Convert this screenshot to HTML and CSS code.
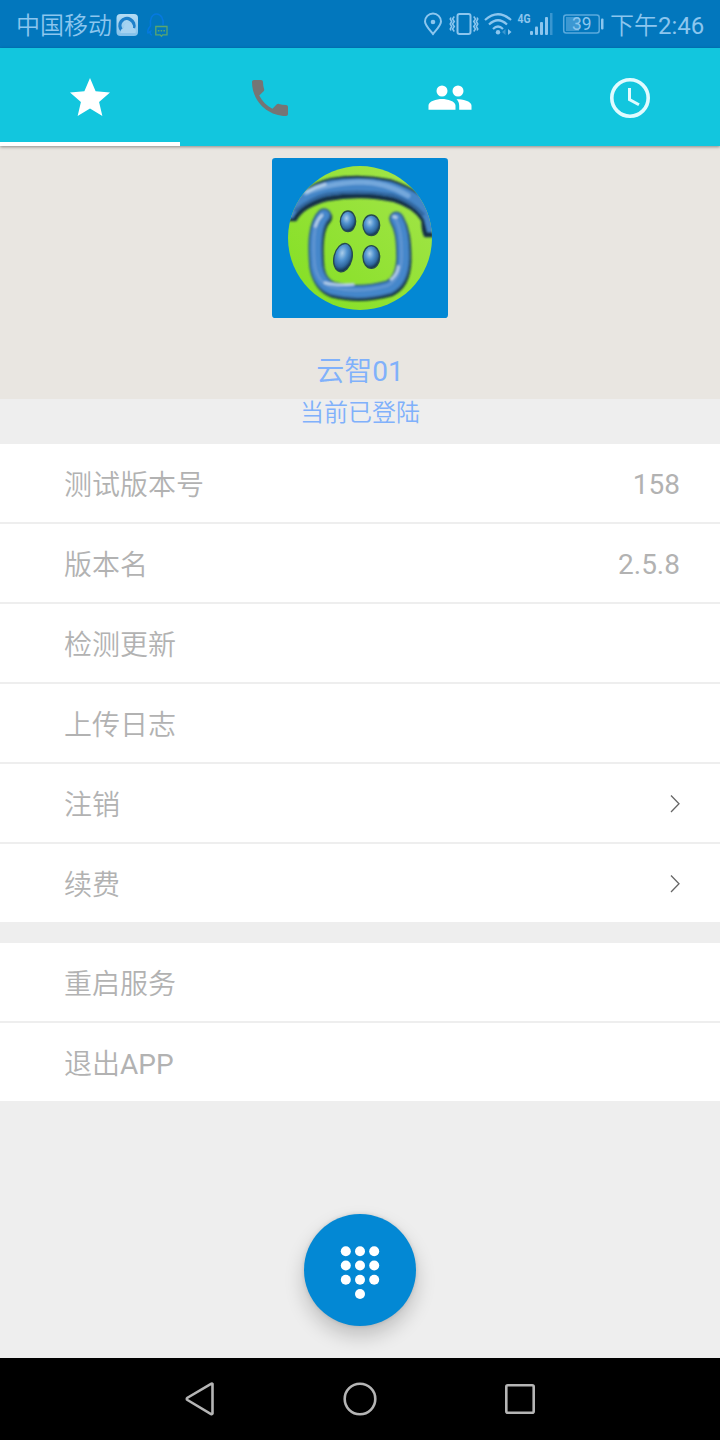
FILE: index.html
```html
<!DOCTYPE html>
<html lang="zh-CN">
<head>
<meta charset="utf-8">
<title>云智01</title>
<link rel="stylesheet" href="styles.css">
</head>
<body>
<div class="screen">
  <header class="status">
    <span class="carrier">中国移动</span>
    <svg class="status-left" width="56" height="48" viewBox="0 0 56 48">
      <defs><linearGradient id="app" x2="0" y2="1"><stop stop-color="#b4dcf4"/><stop offset="1" stop-color="#83c1ea"/></linearGradient></defs>
      <rect x="3.500" y="14" width="21.500" height="22" rx="4" fill="url(#app)"/>
      <path d="M9 30.500A7 7 0 1 1 20.500 28" fill="none" stroke="#1d80ca" stroke-width="3.400"/>
      <path d="M7.500 33a4 4 0 0 1 3.500-5 4.500 4.500 0 0 1 6-5 4 4 0 0 1 3 5q4 1 2.500 5z" fill="#a5d3f1"/>
      <path d="M39 35c-2 0-2-2-1.500-3.500L35 33q-1-3 2.500-7c-1-7 1.500-12 6-12s7.500 5 6.500 11" fill="none" stroke="#0579e0" stroke-width="1.500"/>
      <path d="M42.800 26.500h11.200v8.300h-4.300l-1.300 1.400-1.300-1.400h-4.300z" fill="none" stroke="#5ba66e" stroke-width="1.300"/>
      <path d="M44.800 30.700h1.600m1.200 0h1.600m1.200 0h1.600" stroke="#5ba66e" stroke-width="1.500"/>
    </svg>
    <svg class="status-right" width="190" height="48" viewBox="420 0 190 48">
      <g fill="none" stroke="#8cc6ee" stroke-width="2">
        <path d="M433 34C428 28 425 25 425 21.500a8 8 0 0 1 16 0C441 25 438 28 433 34z"/>
        <rect x="457.500" y="14" width="13" height="20" rx="2"/>
        <path d="M454.300 16.500l-1.800 2.500 1.800 2.500-1.800 2.500 1.800 2.500-1.800 2.500 1.800 2.500M451 17.500l-.8 1.500 1.500 2.500-1.500 2.500 1.500 2.500-1.500 2.500.8 1.500M473.700 16.500l1.800 2.500-1.800 2.500 1.800 2.500-1.800 2.500 1.800 2.500-1.800 2.500M477 17.500l.8 1.500-1.500 2.500 1.500 2.500-1.500 2.500 1.500 2.500-.8 1.500" stroke-width="1.500"/>
        <path d="M485 20Q498 8.500 511 20M489 24.500Q498 16 507 24.500M493 29Q498 24 503 29" stroke-width="2.200"/>
      </g>
      <g fill="#8cc6ee">
        <circle cx="433" cy="22" r="2.300"/>
        <circle cx="498" cy="32.300" r="2.200"/>
        <path d="M508 29v6l3.500-3z"/>
        <path d="M505.500 29v6l-3.500-3z" opacity=".4"/>
        <rect x="530" y="31" width="3" height="4" rx="1"/>
        <rect x="535" y="26.500" width="3" height="8.500" rx="1"/>
        <rect x="540" y="22" width="3" height="13" rx="1"/>
        <rect x="545" y="17" width="3" height="18" rx="1"/>
        <rect x="550" y="13" width="2.500" height="22" opacity=".4"/>
        <rect x="566" y="17" width="13" height="14" opacity=".42"/>
        <rect x="601" y="18.500" width="2.500" height="11" rx="1"/>
      </g>
      <rect x="563.700" y="15" width="35.500" height="18" rx="2.500" fill="none" stroke="#5baadd" stroke-width="1.500"/>
      <text class="net" x="517.500" y="22.500" textLength="13" lengthAdjust="spacingAndGlyphs">4G</text>
      <text class="battery" x="572" y="30.300" textLength="19.500" lengthAdjust="spacingAndGlyphs">39</text>
    </svg>
    <span class="time">下午2:46</span>
  </header>

  <nav class="tabs">
    <div class="tab active"><svg width="48" height="48" viewBox="0 0 24 24"><path d="M12 17.270l6.180 3.730-1.640-7.030L22 9.240l-7.190-.61L12 2 9.190 8.630 2 9.240l5.460 4.730L5.820 21z"/></svg></div>
    <div class="tab phone"><svg width="48" height="48" viewBox="0 0 24 24"><path d="M6.620 10.790c1.440 2.830 3.760 5.140 6.590 6.590l2.200-2.200c.27-.27.67-.36 1.020-.24 1.120.37 2.330.57 3.570.57.55 0 1 .45 1 1V20c0 .55-.45 1-1 1-9.390 0-17-7.610-17-17 0-.55.45-1 1-1h3.500c.55 0 1 .45 1 1 0 1.250.2 2.450.57 3.570.11.35.03.74-.25 1.020l-2.200 2.200z"/></svg></div>
    <div class="tab"><svg width="44" height="28" viewBox="428 83 44 28"><circle cx="442" cy="90" r="5.500"/><circle cx="458" cy="90" r="5.500"/><path d="M428.500 108.800v-4.300c0-4.300 8-6.500 13.500-6.500s13.500 2.200 13.500 6.500v4.300zM456.500 98.200c6 0 15 1.800 15 6.300v4.300h-12.300v-4c0-2.800-1-5-2.700-6.600z"/></svg></div>
    <div class="tab clock"><svg width="48" height="48" viewBox="0 0 48 48"><circle cx="24" cy="24" r="18.200"/><path d="M23.500 14v11.500l9.500 5.300" stroke-width="3"/></svg></div>
  </nav>

  <section class="profile">
    <svg class="avatar" width="176" height="160" viewBox="24 24 528 480">
      <defs>
        <clipPath id="disc"><circle cx="288" cy="264" r="216"/></clipPath>
        <linearGradient id="lime" x1="0" y1="1" x2="1" y2="0"><stop stop-color="#83df22"/><stop offset="1" stop-color="#a5e54b"/></linearGradient>
        <radialGradient id="bead" cx=".4" cy=".35" r=".65"><stop stop-color="#a9cdea"/><stop offset=".4" stop-color="#5394d0"/><stop offset=".75" stop-color="#3069a0"/><stop offset="1" stop-color="#12314c"/></radialGradient>
        <filter id="soft"><feGaussianBlur stdDeviation="3.500"/></filter>
        <path id="bowl" d="M180 196C151 225 152 290 157 350Q165 400 205 416Q285 437 375 412Q416 392 418 325C418 260 412 232 397 206"/>
      </defs>
      <rect x="24" y="24" width="528" height="480" rx="10" fill="#0388d4"/>
      <g clip-path="url(#disc)">
        <rect x="72" y="48" width="432" height="432" fill="url(#lime)"/>
        <g fill="none" stroke-linecap="round" stroke-linejoin="round" filter="url(#soft)">
          <path d="M60 214H97C112 184 145 166 190 154Q290 134 388 156Q448 174 472 213Q472 250 482 262H520V180Q470 118 380 88Q290 68 200 84Q110 104 60 190z" fill="#143149"/>
          <path d="M60 204H87C104 171 145 149 190 138Q290 122 385 141Q450 161 480 207L490 247H520V185Q470 124 380 95Q290 77 200 91Q110 110 60 190z" fill="#4586c8"/>
          <path d="M125 129Q185 101 288 96Q370 98 432 137" stroke="#75a8dc" stroke-width="15"/>
          <path d="M95 181Q145 142 190 132Q290 118 385 135Q445 155 478 193" stroke="#3267a0" stroke-width="9"/>
          <use href="#bowl" x="3" y="6" stroke="#102c40" stroke-width="43"/>
          <use href="#bowl" stroke="#32628f" stroke-width="43"/>
          <use href="#bowl" stroke="#4587cb" stroke-width="32"/>
          <use href="#bowl" x="-5" y="-5" stroke="#6195d2" stroke-width="8"/>
          <path d="M128 126Q155 110 184 103M154 229Q160 209 174 196M183 398Q214 407 268 403M382 388Q400 373 403 350M389 200l8 2" stroke="#b5d0ea" stroke-width="8"/>
        </g>
        <g fill="url(#bead)" stroke="#274b50" stroke-width="4">
          <ellipse cx="252" cy="214" rx="23" ry="31"/>
          <ellipse cx="322" cy="226" rx="25" ry="31"/>
          <ellipse cx="237" cy="323" rx="27" ry="43" transform="rotate(13 237 323)"/>
          <ellipse cx="322" cy="321" rx="25" ry="34"/>
        </g>
      </g>
    </svg>
    <div class="name">云智01</div>
  </section>
  <div class="state">当前已登陆</div>

  <main class="groups">
    <section class="group">
      <div class="row"><span class="label">测试版本号</span><span class="value">158</span></div>
      <div class="row"><span class="label">版本名</span><span class="value">2.5.8</span></div>
      <div class="row"><span class="label">检测更新</span></div>
      <div class="row"><span class="label">上传日志</span></div>
      <div class="row"><span class="label">注销</span><svg class="chevron" width="12" height="20" viewBox="0 0 12 20"><path d="M2 2.500l8 8.300L2 19"/></svg></div>
      <div class="row"><span class="label">续费</span><svg class="chevron" width="12" height="20" viewBox="0 0 12 20"><path d="M2 2.500l8 8.300L2 19"/></svg></div>
    </section>
    <section class="group">
      <div class="row"><span class="label">重启服务</span></div>
      <div class="row"><span class="label">退出APP</span></div>
    </section>
  </main>

  <div class="dial-area">
    <div class="dial">
      <svg width="40" height="56" viewBox="0 0 40 56" fill="#fff">
        <circle cx="5.800" cy="6.300" r="5"/><circle cx="20" cy="6.300" r="5"/><circle cx="34.200" cy="6.300" r="5"/>
        <circle cx="5.800" cy="20.500" r="5"/><circle cx="20" cy="20.500" r="5"/><circle cx="34.200" cy="20.500" r="5"/>
        <circle cx="5.800" cy="34.700" r="5"/><circle cx="20" cy="34.700" r="5"/><circle cx="34.200" cy="34.700" r="5"/>
        <circle cx="20" cy="49" r="5"/>
      </svg>
    </div>
  </div>

  <footer class="navbar">
    <svg width="40" height="40" viewBox="0 0 40 40"><path d="M32.500 5v29.500q-.3 1-1.500.5L7.500 21q-1.500-1 0-2.300L31 4.800q1-.5 1.500.2z"/></svg>
    <svg width="40" height="40" viewBox="0 0 40 40"><circle cx="20" cy="20" r="15.300"/></svg>
    <svg width="40" height="40" viewBox="0 0 40 40"><rect x="6.300" y="6.300" width="27.400" height="27.400" rx="1.500"/></svg>
  </footer>
</div>
</body>
</html>
```
FILE: styles.css
```css
* { box-sizing: border-box; }
body {
  margin: 0;
  font-family: Roboto, "Noto Sans CJK SC DemiLight", "Noto Sans CJK SC", sans-serif;
}
svg { display: block; flex: none; }
.screen {
  display: flex;
  flex-direction: column;
  width: 720px;
  height: 1440px;
  background: #eee;
  overflow: hidden;
}
.status {
  display: flex;
  align-items: center;
  height: 48px;
  padding: 0 16px 0 16px;
  background: #0277bd;
  color: #8cc6ee;
  font-size: 24px;
  line-height: 48px;
  white-space: nowrap;
}
.carrier { width: 97px; padding-top: 3px; }
.status-right { margin-left: auto; }
.time { width: 94px; padding-top: 3px; text-align: right; }
.net { font: 700 13px Roboto, sans-serif; fill: #8cc6ee; }
.battery { font: 400 18px Roboto, sans-serif; fill: #8cc6ee; }
.tabs {
  display: flex;
  flex: none;
  height: 98px;
  background: #12c6de;
  box-shadow: 0 1px 3px rgba(0, 0, 0, .4);
  z-index: 1;
}
.tab {
  display: flex;
  flex: 1;
  align-items: center;
  justify-content: center;
  border-bottom: 4px solid transparent;
  padding-top: 6px;
  fill: #fff;
}
.active { border-bottom-color: #fff; }
.phone { fill: #757575; }
.clock svg { fill: none; stroke: #e0fbff; stroke-width: 3.6; }
.profile {
  display: flex;
  flex-direction: column;
  align-items: center;
  flex: none;
  height: 253px;
  padding-top: 12px;
  background: #e9e6e1;
  color: #80b1fb;
}
.name { margin-top: 34px; font-size: 28px; line-height: 40px; }
.state {
  flex: none;
  height: 45px;
  color: #80b1fb;
  font-size: 24px;
  line-height: 28px;
  text-align: center;
}
.groups { display: flex; flex-direction: column; gap: 21px; }
.group { display: flex; flex-direction: column; gap: 2px; }
.row {
  display: flex;
  align-items: center;
  justify-content: space-between;
  height: 78px;
  padding: 0 40px 0 64px;
  background: #fff;
  color: #b2b2b2;
  font-size: 28px;
  line-height: 40px;
}
.label { padding-top: 6px; }
.value { padding-top: 4px; }
.chevron { fill: none; stroke: #666; stroke-width: 1.3; margin-right: -1px; }
.dial-area {
  display: flex;
  justify-content: center;
  flex: 1;
  padding-top: 113px;
}
.dial {
  display: flex;
  align-items: center;
  justify-content: center;
  width: 112px;
  height: 112px;
  border-radius: 50%;
  background: #0388d4;
  box-shadow: 0 10px 20px rgba(0, 0, 0, .2), 0 0 4px rgba(0, 0, 0, .12);
}
.dial svg { margin-top: 6px; }
.navbar {
  display: flex;
  flex: none;
  align-items: center;
  justify-content: center;
  gap: 120px;
  height: 82px;
  background: #000;
  fill: none;
  stroke: #b5b5b5;
  stroke-width: 2.6;
  z-index: 1;
}
```
